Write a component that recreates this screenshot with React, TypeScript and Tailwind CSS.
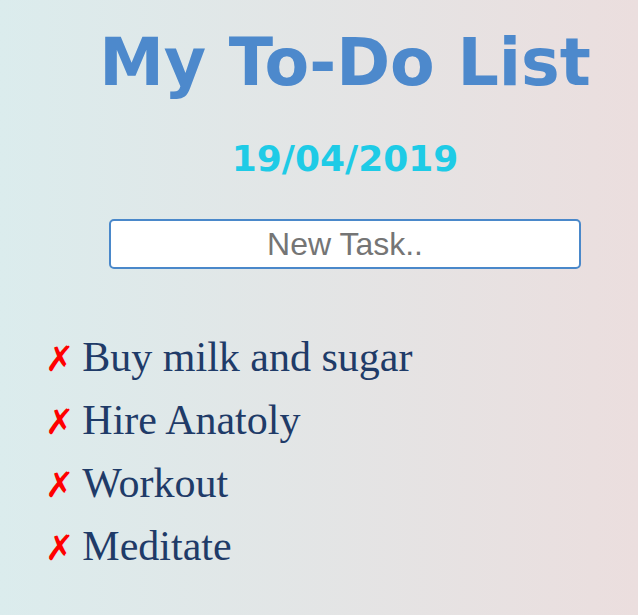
import { useState } from "react";

const initialTasks = ["Buy milk and sugar", "Hire Anatoly", "Workout", "Meditate"];

export default function App() {
  const [tasks, setTasks] = useState(initialTasks);
  const [text, setText] = useState("");

  return (
    <div className="min-h-screen w-full bg-gradient-to-r from-[#dbeced] to-[#ebdede] overflow-hidden">
      <div className="pl-[52px] flex flex-col items-center">
        <h1 className="mt-[30px] text-[65px] leading-none font-bold text-[#4d89cc] font-['DejaVu_Sans',sans-serif]">
          My To-Do List
        </h1>
        <div className="mt-[46px] text-[36px] leading-none font-bold text-[#1ecbe6] font-['DejaVu_Sans',sans-serif]">
          19/04/2019
        </div>
        <input
          value={text}
          onChange={(e) => setText(e.target.value)}
          onKeyDown={(e) => {
            if (e.key === "Enter" && text.trim()) {
              setTasks([...tasks, text.trim()]);
              setText("");
            }
          }}
          placeholder="New Task.."
          className="mt-[42px] w-[472px] h-[50px] bg-white border-2 border-[#4a88ca] rounded-[5px] text-center text-[32px] text-[#333] placeholder:text-[#757575] outline-none font-['Liberation_Sans',Arial,sans-serif]"
        />
      </div>
      <ul className="mt-[57px] pl-[45px]">
        {tasks.map((t, i) => (
          <li key={i} className="flex items-baseline h-[63px] leading-[63px] text-[42px] text-[#1f3b68] font-['Liberation_Serif','Times_New_Roman',serif]">
            <button
              onClick={() => setTasks(tasks.filter((_, j) => j !== i))}
              className="text-[35px] text-[#ff0000] font-['DejaVu_Sans',sans-serif] mr-[8px]"
            >
              ✗
            </button>
            {t}
          </li>
        ))}
      </ul>
    </div>
  );
}
